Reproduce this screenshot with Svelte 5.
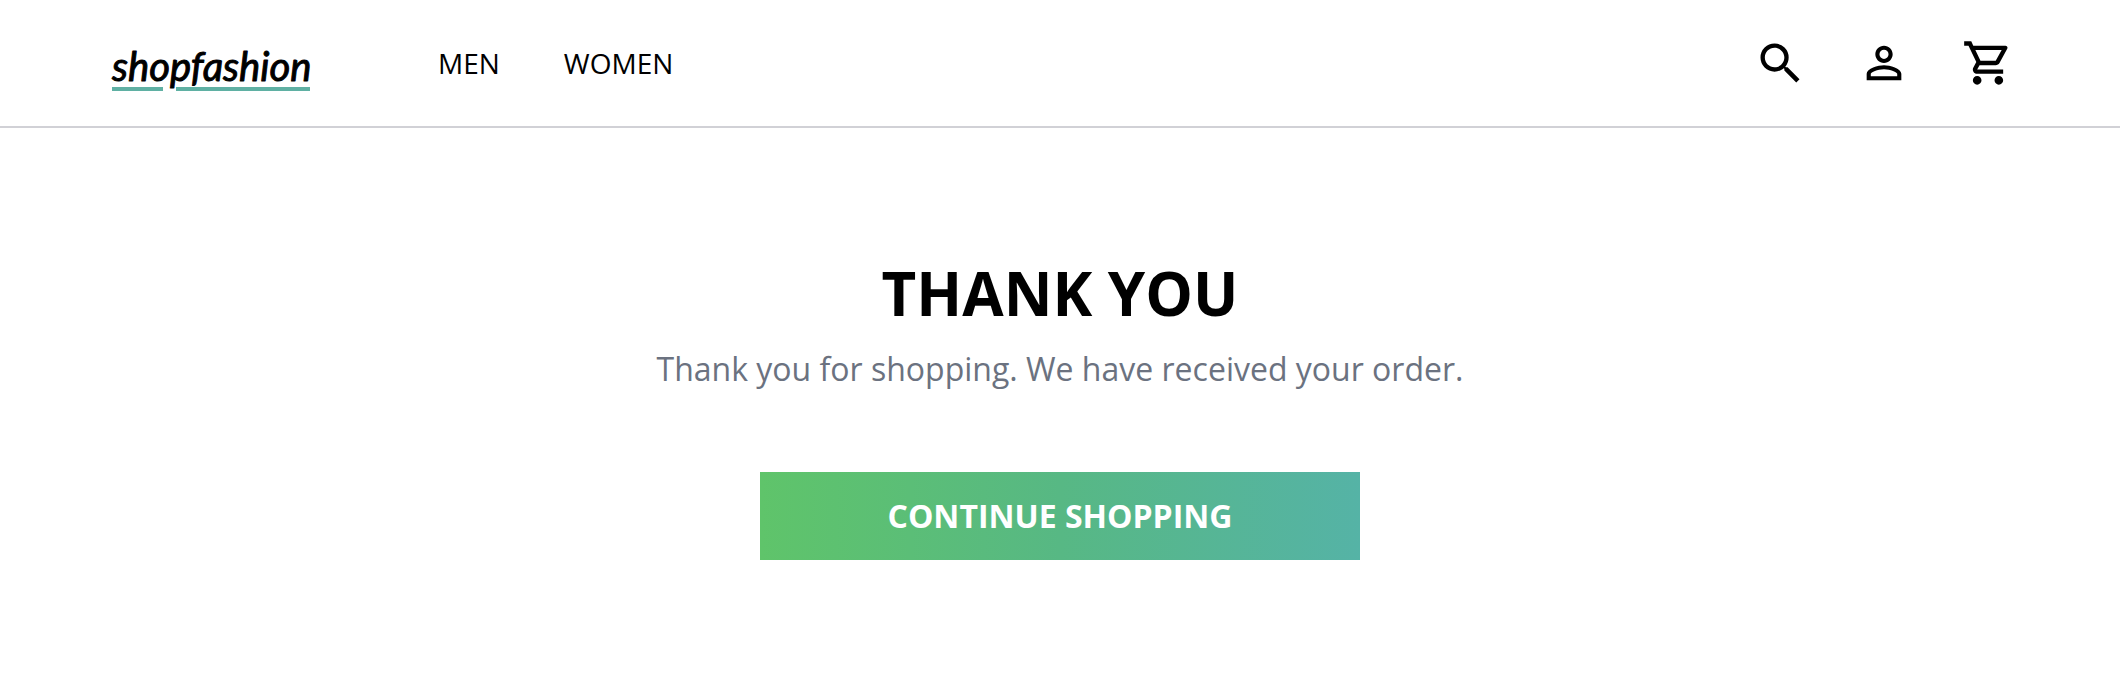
<script>
  const links = ['MEN', 'WOMEN'];
  const actions = [
    {
      label: 'Search',
      path: 'M15.5 14h-.79l-.28-.27A6.471 6.471 0 0 0 16 9.5 6.5 6.5 0 1 0 9.5 16c1.61 0 3.09-.59 4.23-1.57l.27.28v.79l5.5 5.5L21 19.5 15.5 14zm-6 0C7.01 14 5 11.99 5 9.5S7.01 5 9.5 5 14 7.01 14 9.5 11.99 14 9.5 14z'
    },
    {
      label: 'Account',
      path: 'M12 5.9a2.1 2.1 0 1 1 0 4.2 2.1 2.1 0 0 1 0-4.2m0 9c2.97 0 6.1 1.46 6.1 2.1v1.1H5.9V17c0-.64 3.13-2.1 6.1-2.1M12 4C9.79 4 8 5.79 8 8s1.79 4 4 4 4-1.79 4-4-1.79-4-4-4zm0 9c-2.67 0-8 1.34-8 4v3h16v-3c0-2.66-5.33-4-8-4z'
    },
    {
      label: 'Cart',
      path: 'M15.55 13c.75 0 1.41-.41 1.75-1.03l3.58-6.49A.996.996 0 0 0 20.01 4H5.21l-.94-2H1v2h2l3.6 7.59-1.35 2.44C4.52 15.37 5.48 17 7 17h12v-2H7l1.1-2h7.45zM6.16 6h12.15l-2.76 5H8.53L6.16 6zM7 18c-1.1 0-1.99.9-1.99 2S5.9 22 7 22s2-.9 2-2-.9-2-2-2zm10 0c-1.1 0-1.99.9-1.99 2s.89 2 1.99 2 2-.9 2-2-.9-2-2-2z'
    }
  ];
</script>

<header>
  <a class="logo" href="#home">
    <svg class="wordmark" viewBox="0 0 200 60">
      <path d="M0 55h51M64 55h134" stroke="#5fb0a3" stroke-width="4" />
      <text x="0" y="47">shopfashion</text>
    </svg>
  </a>
  <nav>
    {#each links as link}
      <a href="#{link.toLowerCase()}">{link}</a>
    {/each}
  </nav>
  <div class="actions">
    {#each actions as action}
      <button type="button" aria-label={action.label}>
        <svg class="icon" viewBox="0 0 24 24" aria-hidden="true"><path d={action.path} /></svg>
      </button>
    {/each}
  </div>
</header>

<main>
  <h1>THANK YOU</h1>
  <p>Thank you for shopping. We have received your order.</p>
  <a class="continue" href="#shop">CONTINUE SHOPPING</a>
</main>

<style>
  :global(body) {
    margin: 0;
    background: #fff;
    color: #000;
    font-family: 'Open Sans', sans-serif;
  }

  header {
    display: flex;
    align-items: center;
    padding: 32px 5%;
    border-bottom: 2px solid #d1d1d6;
  }

  a {
    color: inherit;
    text-decoration: none;
  }

  .logo {
    padding: 2px 6px 0;
  }

  .wordmark {
    display: block;
    width: 200px;
    height: 60px;
    overflow: visible;
    font-family: Lato, sans-serif;
    font-size: 40px;
    font-style: italic;
    font-weight: 400;
  }

  text {
    stroke: #000;
    stroke-width: 1px;
    stroke-linejoin: round;
  }

  nav {
    display: flex;
    gap: 64px;
    margin-left: 120px;
    font-size: 28px;
    font-weight: 500;
    line-height: 40px;
  }

  .actions {
    display: flex;
    gap: 52px;
    margin-left: auto;
  }

  button {
    padding: 0;
    border: 0;
    background: none;
    color: inherit;
    cursor: pointer;
  }

  .icon {
    display: block;
    width: 52px;
    height: 52px;
    fill: currentColor;
  }

  main {
    display: flex;
    flex-direction: column;
    align-items: center;
    padding: 127px 5%;
    text-align: center;
  }

  h1 {
    margin: 0;
    font-size: 60px;
    font-weight: 700;
    line-height: 76px;
  }

  p {
    margin: 14px 0 0;
    color: #6b7280;
    font-size: 32px;
    font-weight: 500;
    line-height: 48px;
  }

  .continue {
    box-sizing: border-box;
    width: 600px;
    max-width: 100%;
    margin-top: 79px;
    padding: 20px 32px;
    background: linear-gradient(to right, #5fc46a, #57b884, #55b3a6);
    color: #fff;
    font-size: 32px;
    font-weight: 700;
    line-height: 48px;
  }
</style>
